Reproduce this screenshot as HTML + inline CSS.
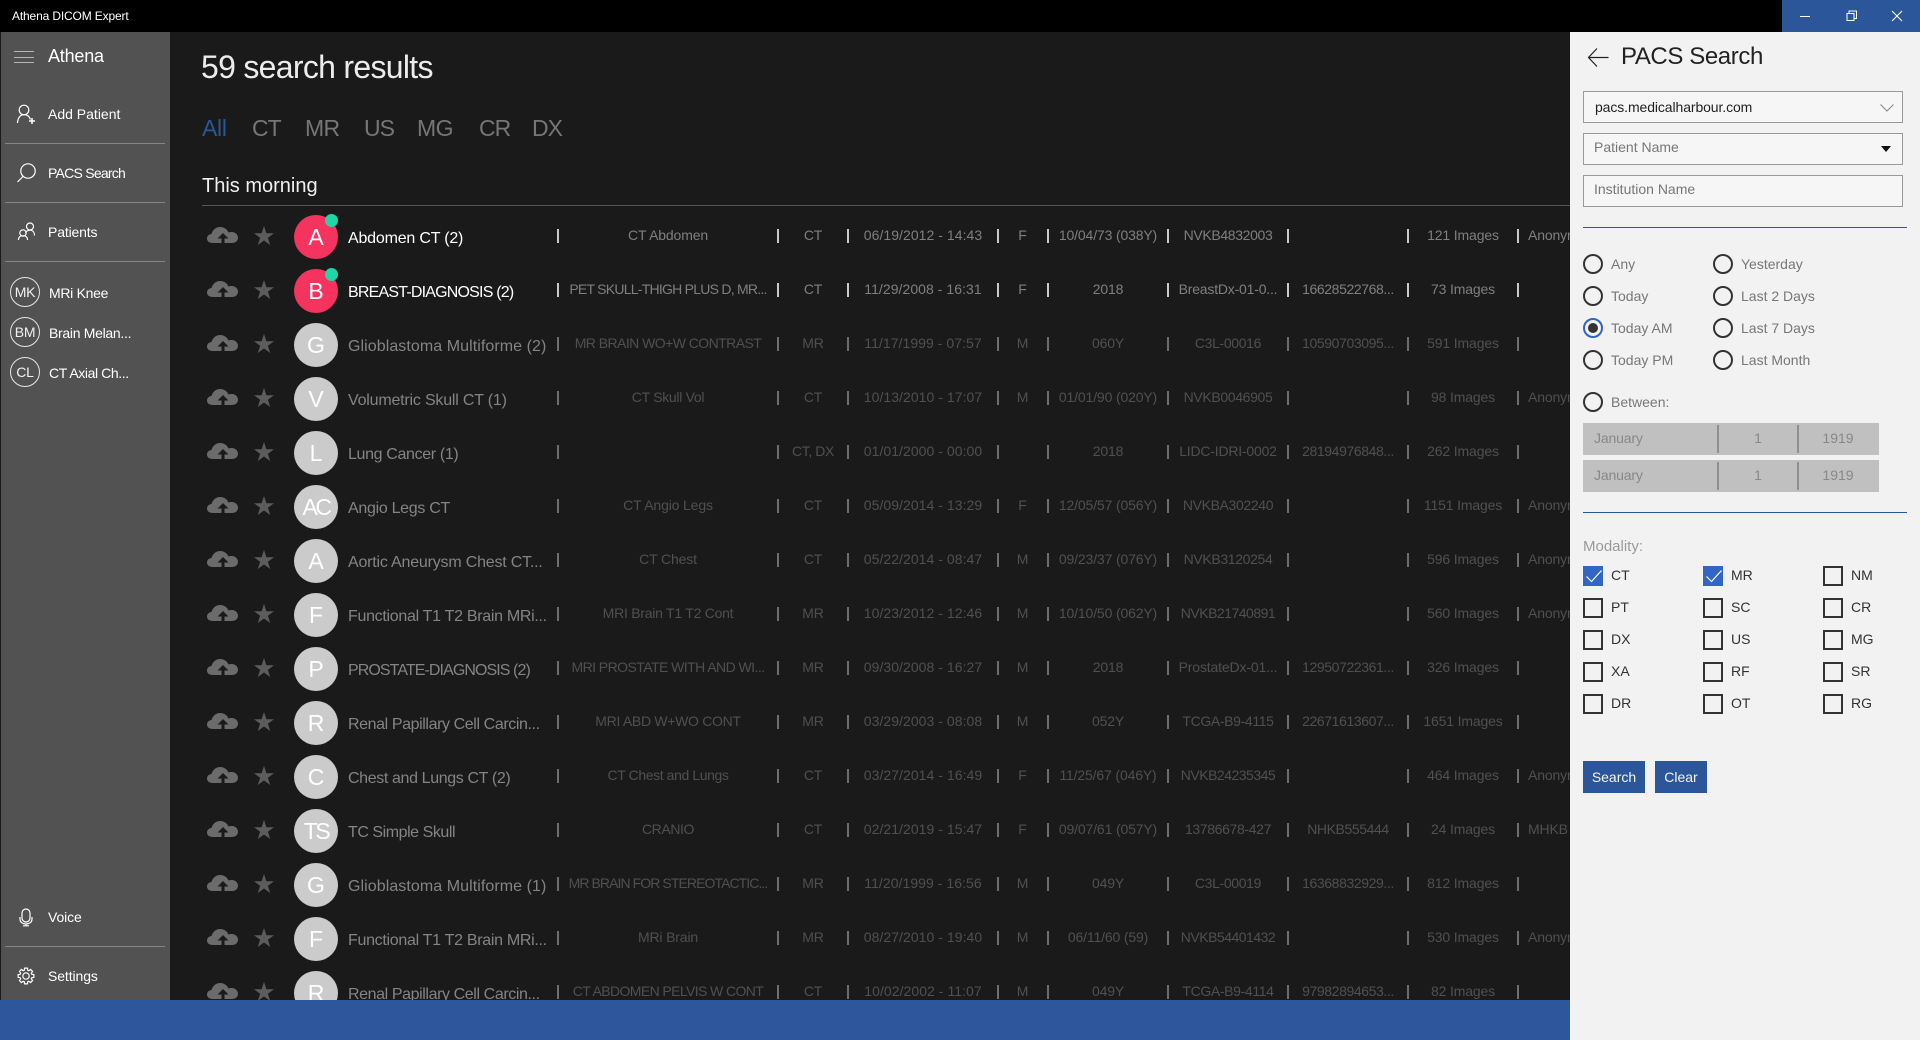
<!DOCTYPE html>
<html lang="en"><head><meta charset="utf-8"><title>Athena DICOM Expert</title>
<style>
*{box-sizing:border-box}
html,body{margin:0;padding:0;width:1920px;height:1040px;overflow:hidden;background:#1a1a1a;font-family:"Liberation Sans","DejaVu Sans",sans-serif;font-size:14px}
.a{position:absolute;white-space:nowrap}
#tb{left:0;top:0;width:1920px;height:32px;background:#000}
#wb{left:1782px;top:0;width:138px;height:32px;background:#2b579a}
#sb{left:1px;top:32px;width:169px;height:968px;background:#525252}
#bar{left:0;top:1000px;width:1570px;height:40px;background:#2d569d;z-index:5}
#pn{left:1570px;top:32px;width:350px;height:1008px;background:#f2f2f2;z-index:6}
.sl{color:#fff;line-height:20px}
.hr{left:5px;width:160px;height:1px;background:#858585}
.pc{left:10px;width:30px;height:30px;border:1.3px solid #e6e6e6;border-radius:50%;color:#f0f0f0;text-align:center;line-height:28px;font-size:14px;letter-spacing:-.2px}
.tab{top:113px;font-size:23px;line-height:30px;color:#767676;letter-spacing:-1px}
.r{position:absolute;left:0;top:0;width:1570px;height:54px;--c:#c9c9c9;color:#7f7f7f;background-repeat:no-repeat;background-size:2px 14px;
background-image:linear-gradient(var(--c),var(--c)),linear-gradient(var(--c),var(--c)),linear-gradient(var(--c),var(--c)),linear-gradient(var(--c),var(--c)),linear-gradient(var(--c),var(--c)),linear-gradient(var(--c),var(--c)),linear-gradient(var(--c),var(--c)),linear-gradient(var(--c),var(--c)),linear-gradient(var(--c),var(--c));
background-position:557px 19px,777px 19px,847px 19px,997px 19px,1047px 19px,1167px 19px,1287px 19px,1407px 19px,1517px 19px}
.r.d{--c:#6e6e6e;color:#505050}
.r>*{position:absolute;white-space:nowrap}
.r svg{overflow:visible}
.r .cl{left:207px;top:17px;width:31px;height:16px}
.r .st{left:254px;top:16px;width:20px;height:19px}
.r .av{left:294px;top:5px;width:44px;height:44px;border-radius:50%;background:#cbcbcb;color:#fff;font-size:23px;line-height:44px;text-align:center;font-style:normal}
.r .p{background:#f5335f}
.r .p:after{content:"";position:absolute;left:31px;top:-1px;width:13px;height:13px;border-radius:50%;background:#1fd6a7}
.r .n{left:348px;top:19px;font-size:16px;line-height:20px;color:#fff;letter-spacing:-.2px}
.r.d .n{color:#848484}
.r span{top:15px;line-height:20px;text-align:center;letter-spacing:-.15px}
.r .c1{left:558px;width:220px}.r .c2{left:778px;width:70px}.r .c3{left:848px;width:150px;letter-spacing:.05px}.r .c4{left:998px;width:49px}.r .c5{left:1048px;width:120px}.r .c6{left:1168px;width:120px;letter-spacing:-.35px}.r .c7{left:1288px;width:120px;letter-spacing:-.4px}.r .c8{left:1408px;width:110px}.r .c9{left:1528px;text-align:left}
.r .up{letter-spacing:-.75px}
.b{left:13px;width:320px;height:32px;border:1px solid #999;background:#f6f6f6;line-height:27px;padding-left:10px;color:#777}
.lb{line-height:20px;color:#777}
.ra{width:20px;height:20px;border:2px solid #333;border-radius:50%}
.ra.on{border-color:#2f66c4}
.ra.on:after{content:"";position:absolute;left:3px;top:3px;width:10px;height:10px;border-radius:50%;background:#333}
.cb{width:20px;height:20px;border:2px solid #333}
.cb.on{background:#3166c6;border-color:#3166c6}
.cb svg{position:absolute;left:-2px;top:-2px}
.ml{line-height:20px;color:#333;margin-top:-1px}
.dt{left:13px;width:296px;height:32px;background:#c0c0c0;color:#888;line-height:31px}
.dt i{position:absolute;top:2px;width:2px;height:28px;background:#8f8f8f}
.dt b{position:absolute;font-weight:400;text-align:center}
.btn{top:729px;height:32px;background:#2b579a;color:#f2f2f2;text-align:center;line-height:32px}
</style></head><body>
<svg width="0" height="0" style="position:absolute"><defs>
<symbol id="cld" viewBox="0 0 31 16"><path fill="#6b6b6b" d="M6 16C2 16 0 14 0 11.5 0 9 2 7.3 4.5 7 5.5 3 9 0 13 0c4 0 7 2 8.5 5.5C22.5 5 23.5 5 25 5c3.500 0 6 3 6 5.500C31 14 28.500 16 25 16Z"/><path fill="#1a1a1a" d="M16 6l-5.500 5.500h4V16h3v-4.500h4Z"/></symbol>
<symbol id="str" viewBox="0 0 20 19"><path fill="#5c5c5c" d="M10 0l2.400 7.200H20l-6.100 4.500 2.300 7.300L10 14.500 3.800 19l2.300-7.300L0 7.200h7.600Z"/></symbol>
</defs></svg>

<div class="a" id="tb"></div>
<div class="a" style="left:12px;top:6px;font-size:12px;line-height:20px;color:#fff;letter-spacing:-.15px">Athena DICOM Expert</div>
<div class="a" id="wb"><svg width="138" height="32" fill="none" stroke="#fff" stroke-width="1"><path d="M18 16.500h10"/><path d="M65 13.500h7v7h-7zM67 13.500v-2.500h7.500v7.500H72"/><path d="M110 11l10 10M120 11l-10 10"/></svg></div>

<div class="a" id="sb"></div>
<svg class="a" style="left:0;top:0;z-index:2" width="170" height="1000" fill="none" stroke="#fff" stroke-width="1.200">
<path d="M14 51.500h20M14 57.500h20M14 62.500h20" stroke="#b5b5b5" stroke-width="1"/>
<circle cx="24" cy="110" r="4.800"/><path d="M17.500 123c.3-5.500 3-8.300 6.500-8.300s5.500 1.800 6.500 4.800"/><path d="M32 118v6M29 121h6" stroke-width="1.500"/>
<circle cx="28" cy="171" r="7.200"/><path d="M23 176.500L17.500 182"/>
<circle cx="30" cy="226.500" r="3.500"/><path d="M25.500 233c.8-1.800 2.500-2.800 4.500-2.800 3 0 4.500 2.200 4.500 5.300"/><circle cx="23" cy="233" r="3.200"/><path d="M18.500 240c0-3 2-4.300 4.500-4.300s4.500 1.300 4.500 4.300"/>
<rect x="22" y="909" width="8" height="13" rx="4"/><path d="M20 917v2c0 3.500 3 5 6 5s6-1.500 6-5v-2M26 924v2M23 925.800h6"/>
<g transform="translate(26 976)"><polygon points="5.74,-1.75 7.88,-1.39 7.88,1.39 5.74,1.75 5.30,2.82 6.55,4.59 4.59,6.55 2.82,5.30 1.75,5.74 1.39,7.88 -1.39,7.88 -1.75,5.74 -2.82,5.30 -4.59,6.55 -6.55,4.59 -5.30,2.82 -5.74,1.75 -7.88,1.39 -7.88,-1.39 -5.74,-1.75 -5.30,-2.82 -6.55,-4.59 -4.59,-6.55 -2.82,-5.30 -1.75,-5.74 -1.39,-7.88 1.39,-7.88 1.75,-5.74 2.82,-5.30 4.59,-6.55 6.55,-4.59 5.30,-2.82"/><circle r="3.200"/></g>
</svg>
<div class="a sl" style="left:48px;top:45px;font-size:18px;line-height:22px;letter-spacing:-.2px">Athena</div>
<div class="a sl" style="left:48px;top:104px">Add Patient</div>
<div class="a hr" style="top:143px"></div>
<div class="a sl" style="left:48px;top:163px;letter-spacing:-.75px">PACS Search</div>
<div class="a hr" style="top:202px"></div>
<div class="a sl" style="left:48px;top:222px;letter-spacing:-.15px">Patients</div>
<div class="a hr" style="top:261px"></div>
<div class="a pc" style="top:277px">MK</div><div class="a sl" style="left:49px;top:283px;letter-spacing:-.3px">MRi Knee</div>
<div class="a pc" style="top:317px">BM</div><div class="a sl" style="left:49px;top:323px;letter-spacing:-.3px">Brain Melan...</div>
<div class="a pc" style="top:357px">CL</div><div class="a sl" style="left:49px;top:363px;letter-spacing:-.4px">CT Axial Ch...</div>
<div class="a sl" style="left:48px;top:907px;letter-spacing:-.1px">Voice</div>
<div class="a hr" style="top:946px"></div>
<div class="a sl" style="left:48px;top:966px;letter-spacing:-.1px">Settings</div>

<div class="a" style="left:201px;top:47px;font-size:32px;line-height:40px;color:#ececec;letter-spacing:-.7px">59 search results</div>
<div class="a tab" style="left:202px;color:#2b579a;letter-spacing:-.3px">All</div>
<div class="a tab" style="left:252px">CT</div>
<div class="a tab" style="left:305px;letter-spacing:-.6px">MR</div>
<div class="a tab" style="left:364px">US</div>
<div class="a tab" style="left:417px;letter-spacing:-.5px">MG</div>
<div class="a tab" style="left:479px">CR</div>
<div class="a tab" style="left:532px">DX</div>
<div class="a" style="left:202px;top:174px;font-size:20px;line-height:24px;color:#f0f0f0">This morning</div>
<div class="a" style="left:202px;top:205px;width:1368px;height:1px;background:#555"></div>

<div class="r" style="top:210px"><svg class="cl"><use href="#cld"/></svg><svg class="st"><use href="#str"/></svg><i class="av p">A</i><div class="n">Abdomen CT (2)</div><span class="c1">CT Abdomen</span><span class="c2">CT</span><span class="c3">06/19/2012 - 14:43</span><span class="c4">F</span><span class="c5">10/04/73 (038Y)</span><span class="c6">NVKB4832003</span><span class="c8">121 Images</span><span class="c9">Anonymous</span></div>
<div class="r" style="top:264px"><svg class="cl"><use href="#cld"/></svg><svg class="st"><use href="#str"/></svg><i class="av p">B</i><div class="n" style="letter-spacing:-.8px">BREAST-DIAGNOSIS (2)</div><span class="c1 up">PET SKULL-THIGH PLUS D, MR...</span><span class="c2">CT</span><span class="c3">11/29/2008 - 16:31</span><span class="c4">F</span><span class="c5">2018</span><span class="c6" style="letter-spacing:-.2px">BreastDx-01-0...</span><span class="c7">16628522768...</span><span class="c8">73 Images</span></div>
<div class="r d" style="top:318px"><svg class="cl"><use href="#cld"/></svg><svg class="st"><use href="#str"/></svg><i class="av">G</i><div class="n" style="letter-spacing:.07px">Glioblastoma Multiforme (2)</div><span class="c1" style="letter-spacing:-.55px">MR BRAIN WO+W CONTRAST</span><span class="c2">MR</span><span class="c3">11/17/1999 - 07:57</span><span class="c4">M</span><span class="c5">060Y</span><span class="c6">C3L-00016</span><span class="c7">10590703095...</span><span class="c8">591 Images</span></div>
<div class="r d" style="top:372px"><svg class="cl"><use href="#cld"/></svg><svg class="st"><use href="#str"/></svg><i class="av">V</i><div class="n">Volumetric Skull CT (1)</div><span class="c1" style="letter-spacing:-.3px">CT Skull Vol</span><span class="c2">CT</span><span class="c3">10/13/2010 - 17:07</span><span class="c4">M</span><span class="c5">01/01/90 (020Y)</span><span class="c6">NVKB0046905</span><span class="c8">98 Images</span><span class="c9">Anonymous</span></div>
<div class="r d" style="top:426px"><svg class="cl"><use href="#cld"/></svg><svg class="st"><use href="#str"/></svg><i class="av">L</i><div class="n" style="letter-spacing:-.35px">Lung Cancer (1)</div><span class="c2" style="letter-spacing:-.4px">CT, DX</span><span class="c3">01/01/2000 - 00:00</span><span class="c5">2018</span><span class="c6" style="letter-spacing:-.2px">LIDC-IDRI-0002</span><span class="c7">28194976848...</span><span class="c8">262 Images</span></div>
<div class="r d" style="top:480px"><svg class="cl"><use href="#cld"/></svg><svg class="st"><use href="#str"/></svg><i class="av" style="letter-spacing:-2.5px">AC</i><div class="n" style="letter-spacing:-.3px">Angio Legs CT</div><span class="c1">CT Angio Legs</span><span class="c2">CT</span><span class="c3">05/09/2014 - 13:29</span><span class="c4">F</span><span class="c5">12/05/57 (056Y)</span><span class="c6">NVKBA302240</span><span class="c8">1151 Images</span><span class="c9">Anonymous</span></div>
<div class="r d" style="top:534px"><svg class="cl"><use href="#cld"/></svg><svg class="st"><use href="#str"/></svg><i class="av">A</i><div class="n">Aortic Aneurysm Chest CT...</div><span class="c1">CT Chest</span><span class="c2">CT</span><span class="c3">05/22/2014 - 08:47</span><span class="c4">M</span><span class="c5">09/23/37 (076Y)</span><span class="c6">NVKB3120254</span><span class="c8">596 Images</span><span class="c9">Anonymous</span></div>
<div class="r d" style="top:588px"><svg class="cl"><use href="#cld"/></svg><svg class="st"><use href="#str"/></svg><i class="av">F</i><div class="n" style="letter-spacing:-.3px">Functional T1 T2 Brain MRi...</div><span class="c1" style="letter-spacing:-.25px">MRI Brain T1 T2 Cont</span><span class="c2">MR</span><span class="c3">10/23/2012 - 12:46</span><span class="c4">M</span><span class="c5">10/10/50 (062Y)</span><span class="c6" style="letter-spacing:-.5px">NVKB21740891</span><span class="c8">560 Images</span><span class="c9">Anonymous</span></div>
<div class="r d" style="top:642px"><svg class="cl"><use href="#cld"/></svg><svg class="st"><use href="#str"/></svg><i class="av">P</i><div class="n" style="letter-spacing:-.92px">PROSTATE-DIAGNOSIS (2)</div><span class="c1" style="letter-spacing:-.55px">MRI PROSTATE WITH AND WI...</span><span class="c2">MR</span><span class="c3">09/30/2008 - 16:27</span><span class="c4">M</span><span class="c5">2018</span><span class="c6" style="letter-spacing:-.15px">ProstateDx-01...</span><span class="c7">12950722361...</span><span class="c8">326 Images</span></div>
<div class="r d" style="top:696px"><svg class="cl"><use href="#cld"/></svg><svg class="st"><use href="#str"/></svg><i class="av">R</i><div class="n" style="letter-spacing:-.4px">Renal Papillary Cell Carcin...</div><span class="c1" style="letter-spacing:-.3px">MRI ABD W+WO CONT</span><span class="c2">MR</span><span class="c3">03/29/2003 - 08:08</span><span class="c4">M</span><span class="c5">052Y</span><span class="c6">TCGA-B9-4115</span><span class="c7">22671613607...</span><span class="c8">1651 Images</span></div>
<div class="r d" style="top:750px"><svg class="cl"><use href="#cld"/></svg><svg class="st"><use href="#str"/></svg><i class="av">C</i><div class="n" style="letter-spacing:-.37px">Chest and Lungs CT (2)</div><span class="c1" style="letter-spacing:-.4px">CT Chest and Lungs</span><span class="c2">CT</span><span class="c3">03/27/2014 - 16:49</span><span class="c4">F</span><span class="c5">11/25/67 (046Y)</span><span class="c6" style="letter-spacing:-.5px">NVKB24235345</span><span class="c8">464 Images</span><span class="c9">Anonymous</span></div>
<div class="r d" style="top:804px"><svg class="cl"><use href="#cld"/></svg><svg class="st"><use href="#str"/></svg><i class="av" style="letter-spacing:-2.5px">TS</i><div class="n" style="letter-spacing:-.45px">TC Simple Skull</div><span class="c1" style="letter-spacing:-.4px">CRANIO</span><span class="c2">CT</span><span class="c3">02/21/2019 - 15:47</span><span class="c4">F</span><span class="c5">09/07/61 (057Y)</span><span class="c6">13786678-427</span><span class="c7">NHKB555444</span><span class="c8">24 Images</span><span class="c9">MHKB</span></div>
<div class="r d" style="top:858px"><svg class="cl"><use href="#cld"/></svg><svg class="st"><use href="#str"/></svg><i class="av">G</i><div class="n" style="letter-spacing:.07px">Glioblastoma Multiforme (1)</div><span class="c1" style="letter-spacing:-.92px">MR BRAIN FOR STEREOTACTIC...</span><span class="c2">MR</span><span class="c3">11/20/1999 - 16:56</span><span class="c4">M</span><span class="c5">049Y</span><span class="c6">C3L-00019</span><span class="c7">16368832929...</span><span class="c8">812 Images</span></div>
<div class="r d" style="top:912px"><svg class="cl"><use href="#cld"/></svg><svg class="st"><use href="#str"/></svg><i class="av">F</i><div class="n" style="letter-spacing:-.3px">Functional T1 T2 Brain MRi...</div><span class="c1">MRi Brain</span><span class="c2">MR</span><span class="c3">08/27/2010 - 19:40</span><span class="c4">M</span><span class="c5">06/11/60 (59)</span><span class="c6" style="letter-spacing:-.5px">NVKB54401432</span><span class="c8">530 Images</span><span class="c9">Anonymous</span></div>
<div class="r d" style="top:966px"><svg class="cl"><use href="#cld"/></svg><svg class="st"><use href="#str"/></svg><i class="av">R</i><div class="n" style="letter-spacing:-.4px">Renal Papillary Cell Carcin...</div><span class="c1" style="letter-spacing:-.6px">CT ABDOMEN PELVIS W CONT</span><span class="c2">CT</span><span class="c3">10/02/2002 - 11:07</span><span class="c4">M</span><span class="c5">049Y</span><span class="c6">TCGA-B9-4114</span><span class="c7">97982894653...</span><span class="c8">82 Images</span></div>

<div class="a" id="bar"></div>

<div class="a" id="pn">
<svg class="a" style="left:0;top:0" width="350" height="140" fill="none" stroke="#222" stroke-width="1.200"><path d="M19.500 25.500h19M27 16.500l-8.500 9 8.500 9"/></svg>
<div class="a" style="left:51px;top:11px;font-size:24px;line-height:28px;color:#222;letter-spacing:-.4px">PACS Search</div>
<div class="a b" style="top:59px;color:#222;padding-left:11px;letter-spacing:-.1px;line-height:30px">pacs.medicalharbour.com</div>
<svg class="a" style="left:310px;top:72px" width="14" height="8" fill="none" stroke="#888"><path d="M.5.500l6.500 6.500 6.500-6.500"/></svg>
<div class="a b" style="top:101px">Patient Name</div>
<svg class="a" style="left:311px;top:114px" width="10" height="6"><path d="M0 0h10L5 6Z" fill="#111"/></svg>
<div class="a b" style="top:143px">Institution Name</div>
<div class="a" style="left:13px;top:195px;width:324px;height:1px;background:#2b579a"></div>

<div class="a ra" style="left:13px;top:222px"></div><div class="a lb" style="left:41px;top:222px">Any</div>
<div class="a ra" style="left:13px;top:254px"></div><div class="a lb" style="left:41px;top:254px">Today</div>
<div class="a ra on" style="left:13px;top:286px"></div><div class="a lb" style="left:41px;top:286px">Today AM</div>
<div class="a ra" style="left:13px;top:318px"></div><div class="a lb" style="left:41px;top:318px">Today PM</div>
<div class="a ra" style="left:143px;top:222px"></div><div class="a lb" style="left:171px;top:222px">Yesterday</div>
<div class="a ra" style="left:143px;top:254px"></div><div class="a lb" style="left:171px;top:254px">Last 2 Days</div>
<div class="a ra" style="left:143px;top:286px"></div><div class="a lb" style="left:171px;top:286px">Last 7 Days</div>
<div class="a ra" style="left:143px;top:318px"></div><div class="a lb" style="left:171px;top:318px">Last Month</div>
<div class="a ra" style="left:13px;top:360px"></div><div class="a lb" style="left:41px;top:360px">Between:</div>

<div class="a dt" style="top:391px"><b style="left:11px;letter-spacing:-.15px">January</b><i style="left:134px"></i><b style="left:136px;width:78px">1</b><i style="left:214px"></i><b style="left:216px;width:78px">1919</b></div>
<div class="a dt" style="top:428px"><b style="left:11px;letter-spacing:-.15px">January</b><i style="left:134px"></i><b style="left:136px;width:78px">1</b><i style="left:214px"></i><b style="left:216px;width:78px">1919</b></div>
<div class="a" style="left:13px;top:480px;width:324px;height:1px;background:#2b579a"></div>

<div class="a" style="left:13px;top:505px;font-size:15px;line-height:20px;color:#9a9a9a">Modality:</div>

<div class="a cb on" style="left:13px;top:534px"><svg width="20" height="20" fill="none" stroke="#fff" stroke-width="1.200"><path d="M3.500 10.500l5 5 10-11"/></svg></div><div class="a ml" style="left:41px;top:534px">CT</div>
<div class="a cb on" style="left:133px;top:534px"><svg width="20" height="20" fill="none" stroke="#fff" stroke-width="1.200"><path d="M3.500 10.500l5 5 10-11"/></svg></div><div class="a ml" style="left:161px;top:534px">MR</div>
<div class="a cb" style="left:253px;top:534px"></div><div class="a ml" style="left:281px;top:534px">NM</div>
<div class="a cb" style="left:13px;top:566px"></div><div class="a ml" style="left:41px;top:566px">PT</div>
<div class="a cb" style="left:133px;top:566px"></div><div class="a ml" style="left:161px;top:566px">SC</div>
<div class="a cb" style="left:253px;top:566px"></div><div class="a ml" style="left:281px;top:566px">CR</div>
<div class="a cb" style="left:13px;top:598px"></div><div class="a ml" style="left:41px;top:598px">DX</div>
<div class="a cb" style="left:133px;top:598px"></div><div class="a ml" style="left:161px;top:598px">US</div>
<div class="a cb" style="left:253px;top:598px"></div><div class="a ml" style="left:281px;top:598px">MG</div>
<div class="a cb" style="left:13px;top:630px"></div><div class="a ml" style="left:41px;top:630px">XA</div>
<div class="a cb" style="left:133px;top:630px"></div><div class="a ml" style="left:161px;top:630px">RF</div>
<div class="a cb" style="left:253px;top:630px"></div><div class="a ml" style="left:281px;top:630px">SR</div>
<div class="a cb" style="left:13px;top:662px"></div><div class="a ml" style="left:41px;top:662px">DR</div>
<div class="a cb" style="left:133px;top:662px"></div><div class="a ml" style="left:161px;top:662px">OT</div>
<div class="a cb" style="left:253px;top:662px"></div><div class="a ml" style="left:281px;top:662px">RG</div>

<div class="a btn" style="left:13px;width:62px">Search</div>
<div class="a btn" style="left:85px;width:52px">Clear</div>
</div>
</body></html>
